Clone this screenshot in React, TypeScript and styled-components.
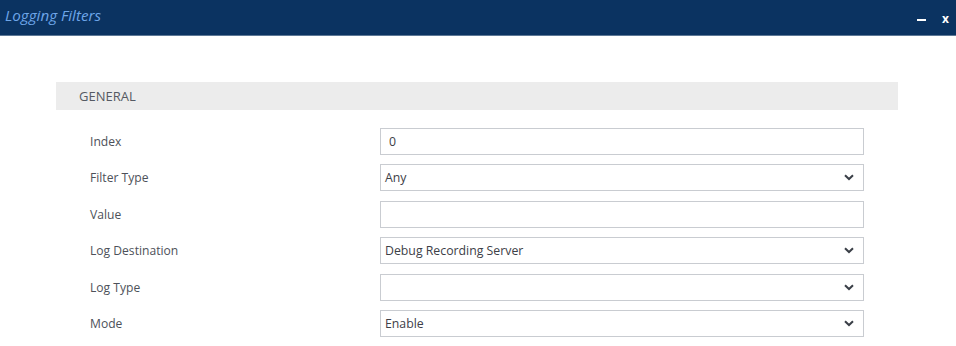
import React from "react";
import styled, { createGlobalStyle } from "styled-components";

const Global = createGlobalStyle`
  html, body { margin: 0; padding: 0; background: #fff; }
  body { font-family: "Open Sans", "Noto Sans", sans-serif; }
  * { box-sizing: border-box; }
`;

const Header = styled.div`
  height: 36px;
  background: #0b3361;
  border-bottom: 1px solid #5d7896;
  display: flex;
  align-items: center;
  justify-content: space-between;
  padding: 0 7px 0 5px;
`;

const Title = styled.div`
  font-style: italic;
  font-size: 15.2px;
  color: #6ea6e9;
  margin-top: -5px;
`;

const Controls = styled.div`
  display: flex;
  align-items: center;
  gap: 16px;
  color: #fff;
  font-weight: 700;
  font-size: 12px;
  margin-top: 1px;
`;

const Minimize = styled.span`
  display: block;
  width: 9px;
  height: 2px;
  background: #fff;
  margin-top: 4px;
`;

const Content = styled.div`
  padding: 46px 58px 0 56px;
`;

const SectionBar = styled.div`
  height: 28px;
  background: #ececec;
  display: flex;
  align-items: center;
  padding-left: 23px;
  font-size: 13px;
  color: #555a63;
`;

const Form = styled.div`
  display: grid;
  grid-template-columns: 290px 484px;
  row-gap: 9.4px;
  padding: 18px 0 0 34px;
  align-items: center;
`;

const Label = styled.div`
  font-size: 12.1px;
  color: #4d5159;
`;

const Field = styled.div<{ $select: boolean }>`
  height: 27px;
  border: 1px solid #c9ccd1;
  background: #fff;
  display: flex;
  align-items: center;
  justify-content: space-between;
  padding: 0 9px 0 ${(p) => (p.$select ? 4 : 8)}px;
  font-size: 12.3px;
  color: #3d4047;
`;

const Chevron = () => (
  <svg width="10" height="7" viewBox="0 0 10 7">
    <path d="M1 1.2 L5 5 L9 1.2" fill="none" stroke="#3a3f47" strokeWidth="2" />
  </svg>
);

const rows: { label: string; value: string; select: boolean }[] = [
  { label: "Index", value: "0", select: false },
  { label: "Filter Type", value: "Any", select: true },
  { label: "Value", value: "", select: false },
  { label: "Log Destination", value: "Debug Recording Server", select: true },
  { label: "Log Type", value: "", select: true },
  { label: "Mode", value: "Enable", select: true },
];

export default function App() {
  return (
    <>
      <Global />
      <Header>
        <Title>Logging Filters</Title>
        <Controls>
          <Minimize />
          <span>x</span>
        </Controls>
      </Header>
      <Content>
        <SectionBar>GENERAL</SectionBar>
        <Form>
          {rows.map((r) => (
            <React.Fragment key={r.label}>
              <Label>{r.label}</Label>
              <Field $select={r.select}>
                <span>{r.value}</span>
                {r.select && <Chevron />}
              </Field>
            </React.Fragment>
          ))}
        </Form>
      </Content>
    </>
  );
}
